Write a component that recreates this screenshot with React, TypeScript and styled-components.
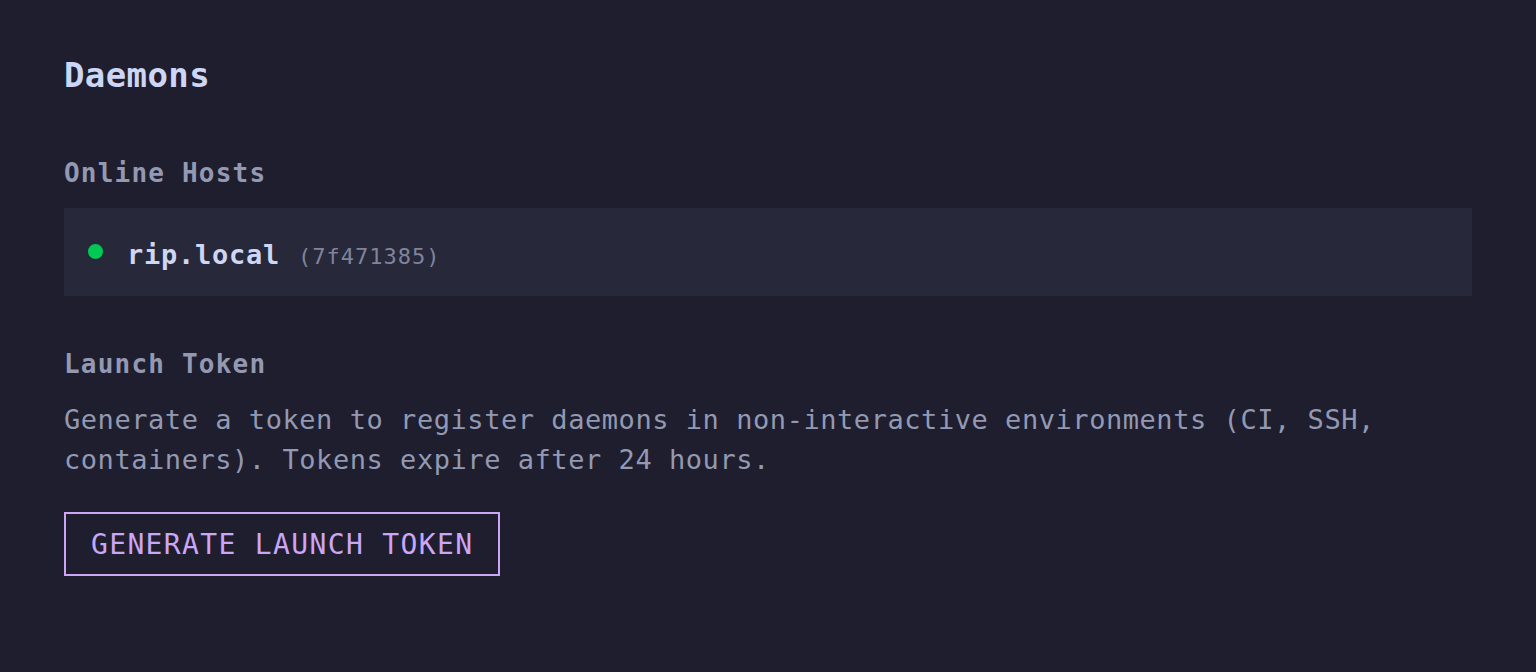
import React from "react";
import styled, { createGlobalStyle } from "styled-components";

const GlobalStyle = createGlobalStyle`
  html, body {
    margin: 0;
    padding: 0;
    background: #1e1e2e;
  }
  body {
    font-family: "DejaVu Sans Mono", "Liberation Mono", monospace;
  }
`;

const Page = styled.div`
  min-height: 672px;
  box-sizing: border-box;
  padding: 54px 64px;
  background: #1e1e2e;
  color: #9399b2;
`;

const Title = styled.h1`
  margin: 0 0 56px;
  font-size: 34px;
  line-height: 42px;
  font-weight: 700;
  letter-spacing: 0.4px;
  color: #cdd6f4;
`;

type SectionProps = {
  gapBelow: number;
};
const SectionTitle = styled.h2<SectionProps>`
  margin: 0 0 ${(props) => props.gapBelow}px;
  font-size: 26px;
  line-height: 42px;
  font-weight: 700;
  letter-spacing: 1.2px;
  color: #9399b2;
`;

const HostCard = styled.div`
  display: flex;
  align-items: center;
  gap: 24px;
  height: 88px;
  box-sizing: border-box;
  padding: 0 24px;
  margin-bottom: 47px;
  background: #272839;
`;

const StatusDot = styled.span`
  width: 15px;
  height: 15px;
  border-radius: 50%;
  background: #00c853;
  flex-shrink: 0;
  margin-top: -2px;
`;

const HostLabel = styled.div`
  padding-top: 5px;
`;

const HostName = styled.span`
  font-size: 27px;
  font-weight: 700;
  letter-spacing: 0.75px;
  color: #cdd6f4;
`;

const HostId = styled.span`
  margin-left: 18px;
  font-size: 22px;
  font-weight: 400;
  letter-spacing: 1px;
  color: #7f849c;
`;

const Description = styled.p`
  margin: 0 0 32px;
  max-width: 1340px;
  font-size: 27px;
  line-height: 40px;
  letter-spacing: 0.55px;
  color: #9399b2;
`;

const OutlineButton = styled.button`
  display: inline-flex;
  align-items: center;
  height: 64px;
  box-sizing: border-box;
  padding: 0 25px;
  border: 2px solid #cba6f7;
  background: transparent;
  color: #cba6f7;
  font-family: "DejaVu Sans Mono", monospace;
  font-size: 28px;
  letter-spacing: 1.35px;
  cursor: pointer;
`;

function App() {
  return (
    <Page>
      <GlobalStyle />
      <Title>Daemons</Title>

      <SectionTitle gapBelow={14}>Online Hosts</SectionTitle>
      <HostCard>
        <StatusDot />
        <HostLabel>
          <HostName>rip.local</HostName>
          <HostId>(7f471385)</HostId>
        </HostLabel>
      </HostCard>

      <SectionTitle gapBelow={15}>Launch Token</SectionTitle>
      <Description>
        Generate a token to register daemons in non-interactive environments
        (CI, SSH, containers). Tokens expire after 24 hours.
      </Description>
      <OutlineButton>GENERATE LAUNCH TOKEN</OutlineButton>
    </Page>
  );
}

export default App;
